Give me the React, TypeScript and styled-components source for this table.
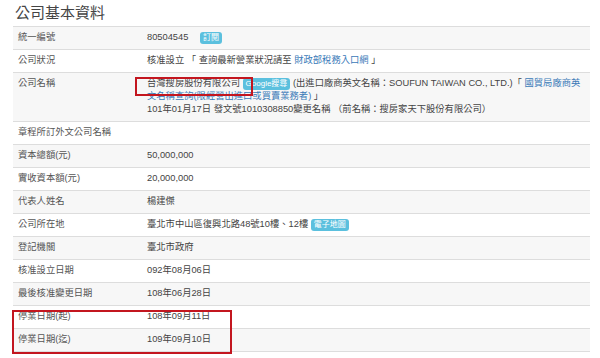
import React from 'react';
import styled, { createGlobalStyle } from 'styled-components';

const GlobalStyle = createGlobalStyle`
  html, body {
    margin: 0;
    padding: 0;
    background: #fff;
  }
  body {
    font-family: "Liberation Sans", "Noto Sans CJK TC", sans-serif;
    color: #444;
  }
`;

const Page = styled.div`
  width: 600px;
  height: 358px;
  overflow: hidden;
  padding-left: 13px;
  box-sizing: border-box;
`;

const Title = styled.h3`
  margin: 0;
  padding-left: 2px;
  height: 26px;
  line-height: 26px;
  font-size: 15px;
  font-weight: normal;
  color: #444;
`;

const TableWrap = styled.div`
  position: relative;
  width: 577px;
`;

const Table = styled.table`
  width: 100%;
  border-collapse: collapse;
  font-size: 9.3px;
  line-height: 13px;
`;

const Row = styled.tr<{ $striped: boolean }>`
  background: ${({ $striped }) => ($striped ? '#f7f7f7' : '#fff')};
  border-top: 1px solid #ddd;
  border-bottom: 1px solid #ddd;
`;

const Label = styled.td`
  width: 124px;
  padding: 4px 0 5px 5px;
  vertical-align: top;
  color: #555;
`;

const Value = styled.td`
  padding: 4px 5px 5px 5px;
  vertical-align: top;
  color: #444;
`;

const Link = styled.a`
  color: #3a7ab8;
  text-decoration: none;
`;

const Badge = styled.span<{ $gap?: number }>`
  display: inline-block;
  margin-left: ${({ $gap }) => $gap ?? 0}px;
  padding: 1px 3px;
  border-radius: 3px;
  background: #5bc0de;
  color: #fff;
  font-size: 8px;
  line-height: 10px;
  vertical-align: 0;
`;

const Highlight = styled.div<{ $left: number; $top: number; $w: number; $h: number }>`
  position: absolute;
  left: ${({ $left }) => $left}px;
  top: ${({ $top }) => $top}px;
  width: ${({ $w }) => $w}px;
  height: ${({ $h }) => $h}px;
  border: 2px solid #c3161f;
  box-sizing: border-box;
  pointer-events: none;
`;

type Item = { label: string; value: React.ReactNode };

const items: Item[] = [
  {
    label: '統一編號',
    value: (
      <>
        80504545 <Badge $gap={9}>訂閱</Badge>
      </>
    ),
  },
  {
    label: '公司狀況',
    value: (
      <>
        核准設立 「 查詢最新營業狀況請至 <Link href="#">財政部稅務入口網</Link> 」
      </>
    ),
  },
  {
    label: '公司名稱',
    value: (
      <>
        台灣搜房股份有限公司 <Badge>Google搜尋</Badge> (出進口廠商英文名稱：SOUFUN TAIWAN CO., LTD.)「{' '}
        <Link href="#">國貿局廠商英文名稱查詢(限經營出進口或買賣業務者)</Link> 」
        <br />
        101年01月17日 發文號1010308850變更名稱 （前名稱：搜房家天下股份有限公司）
      </>
    ),
  },
  { label: '章程所訂外文公司名稱', value: '' },
  { label: '資本總額(元)', value: '50,000,000' },
  { label: '實收資本額(元)', value: '20,000,000' },
  { label: '代表人姓名', value: '楊建傑' },
  {
    label: '公司所在地',
    value: (
      <>
        臺北市中山區復興北路48號10樓、12樓 <Badge>電子地圖</Badge>
      </>
    ),
  },
  { label: '登記機關', value: '臺北市政府' },
  { label: '核准設立日期', value: '092年08月06日' },
  { label: '最後核准變更日期', value: '108年06月28日' },
  { label: '停業日期(起)', value: '108年09月11日' },
  { label: '停業日期(迄)', value: '109年09月10日' },
];

export default function App() {
  return (
    <Page>
      <GlobalStyle />
      <Title>公司基本資料</Title>
      <TableWrap>
        <Table>
          <tbody>
            {items.map((item, i) => (
              <Row key={item.label} $striped={i % 2 === 0}>
                <Label>{item.label}</Label>
                <Value>{item.value}</Value>
              </Row>
            ))}
          </tbody>
        </Table>
        <Highlight $left={122} $top={51} $w={118} $h={19} />
        <Highlight $left={-1} $top={284} $w={220} $h={44} />
      </TableWrap>
    </Page>
  );
}
